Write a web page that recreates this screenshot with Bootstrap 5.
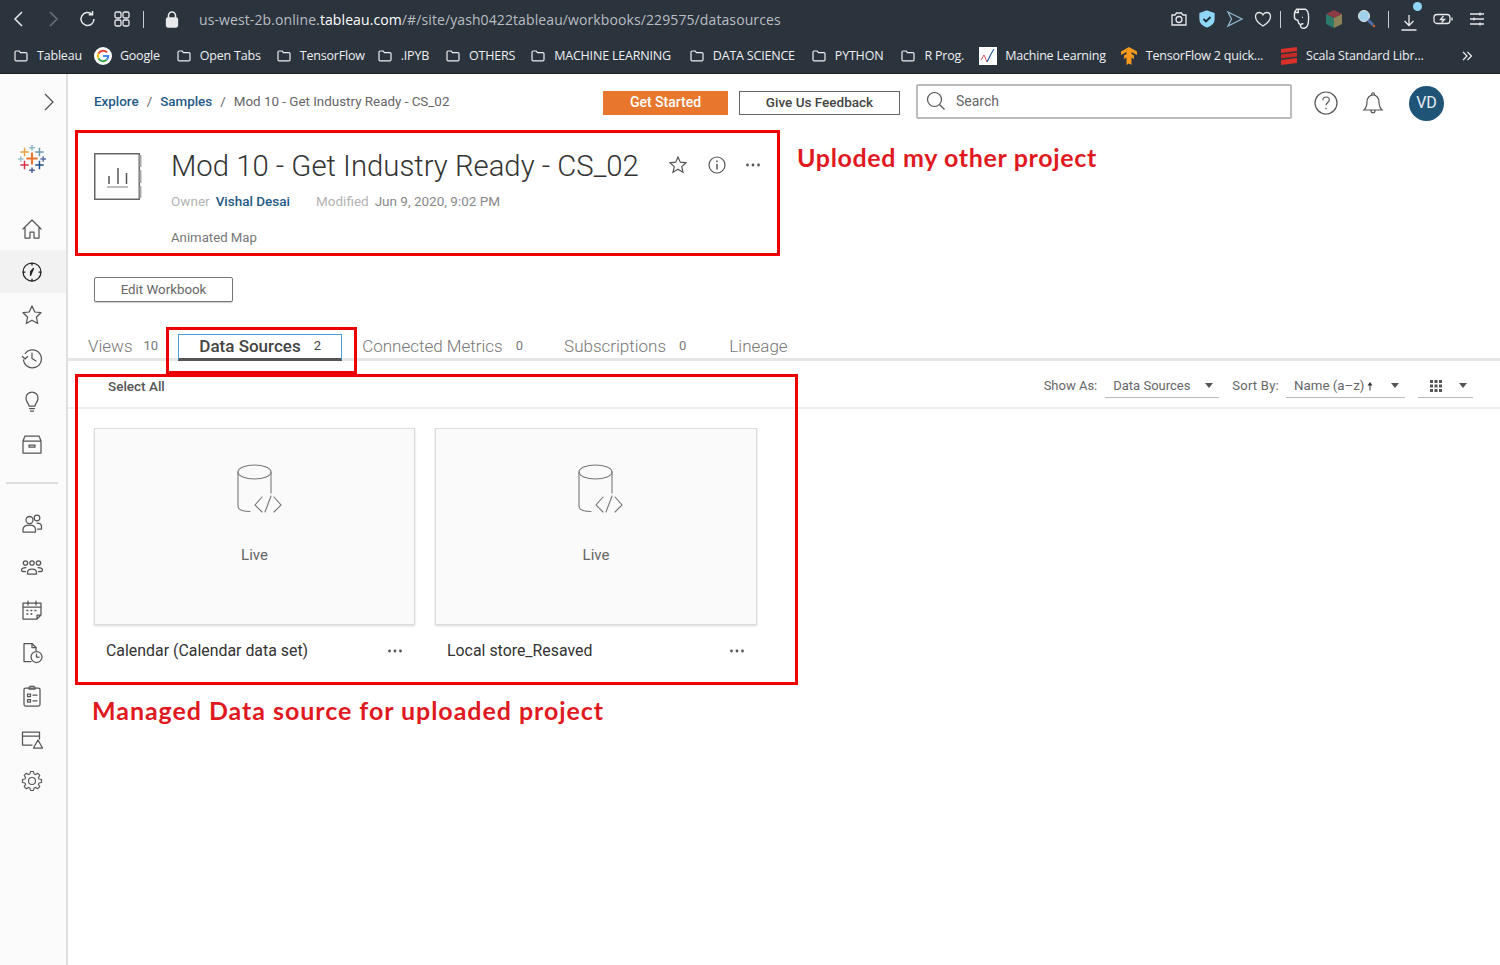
<!DOCTYPE html>
<html lang="en">
<head>
<meta charset="UTF-8">
<title>Mod 10 - Get Industry Ready - CS_02</title>
<link href="https://cdn.jsdelivr.net/npm/bootstrap@5.3.2/dist/css/bootstrap.min.css" rel="stylesheet">
<style>
  html, body { height: 100%; }
  body { font-family: Roboto, "Liberation Sans", sans-serif; color: #555; background: #fff; overflow: hidden; }
  .page-wrap { width: 1500px; height: 965px; }

  /* browser chrome */
  .chrome { height: 74px; background: #2b333d; border-bottom: 1px solid #1b2026; color: #f0f2f4; font-family: "Open Sans", "Noto Sans", sans-serif; }
  .tool-row { height: 38px; }
  .nav-group { padding-left: 8px; }
  .tool-ico { position: relative; width: 20px; height: 20px; flex: none; fill: none; stroke: #e8eaec; stroke-width: 1.3; }
  .tool-sep { width: 1px; height: 17px; background: #c8ccd0; flex: none; }
  .ico-dim { stroke: #6a7178; margin-left: 16px; }
  .ico-gap { margin-left: 14px; }
  .sep-left { margin-left: 11px; }
  .lock-gap { margin-left: 18px; }
  .url-text { font-size: 14px; color: #b9bec3; letter-spacing: .1px; margin-left: 17px; }
  .url-text b { color: #fff; font-weight: 400; }
  .ext-group { gap: 8px; padding-right: 13px; }
  .ico-send { stroke: #8fb6cb; }
  .sep-a { margin-left: -1px; }
  .ico-note { width: 22px; height: 24px; margin-left: 1px; }
  .ico-cube { margin-left: 5px; }
  .ico-mag { margin-left: 6px; }
  .sep-b { margin-left: 3px; }
  .dl-wrap { width: 28px; height: 20px; margin-left: 2px; }
  .dl-dot { left: 14px; top: -7px; width: 9px; height: 9px; background: #8fd6f7; }
  .ico-batt { width: 22px; margin-left: -3px; }
  .ico-menu { margin-left: 5px; }
  .mark-row { height: 35px; font-size: 12.5px; padding: 1px 0 0 14px; letter-spacing: -.2px; white-space: nowrap; gap: 15px; }
  .mark-item { display: flex; align-items: center; gap: 9px; color: #eef0f2; }
  .mark-item svg { flex: none; }
  .mark-item:nth-child(2) { margin-left: -3px; gap: 8px; }
  .mark-item:nth-child(3) { margin-left: 2px; }
  .mark-item:nth-child(4) { margin-left: 1px; }
  .mark-item:nth-child(5) { margin-left: -2px; }
  .mark-item:nth-child(6) { margin-left: 2px; }
  .mark-item:nth-child(7) { margin-left: 1px; }
  .mark-item:nth-child(8) { margin-left: 4px; }
  .mark-item:nth-child(9) { margin-left: 2px; }
  .mark-item:nth-child(10) { margin-left: 3px; }
  .mark-item:nth-child(11) { gap: 8px; }
  .mark-item:nth-child(13) { margin-left: 2px; gap: 8px; }
  .mark-item:nth-child(14) { margin-left: 22px; }

  /* side rail */
  .side-rail { width: 68px; background: #fbfbfb; border-right: 2px solid #dfdfdf; height: 891px; flex: none; }
  .rail-chev { height: 56px; padding-right: 11px; }
  .rail-logo { height: 77px; padding: 15px 2px 0 0; }
  .rail-btn { height: 43px; width: 66px; padding-right: 2px; display: flex; align-items: center; justify-content: center; }
  .rail-btn svg { width: 24px; height: 24px; fill: none; stroke: #555; stroke-width: 1.25; stroke-linecap: round; stroke-linejoin: round; }
  .rail-btn.is-on { background: #f2f2f2; }
  .rail-btn.is-on svg { stroke: #222; }
  .rail-btn svg.gear-ico { width: 22px; height: 22px; margin-top: -2px; }
  .rail-rule { height: 2px; background: #ddd; margin: 17px 8px 18px 6px; }

  /* content */
  .top-row { height: 56px; padding-left: 26px; }
  .crumb-nav { width: 370px; flex: none; white-space: nowrap; }
  .breadcrumb { font-size: 13.4px; flex-wrap: nowrap; --bs-breadcrumb-divider-color: #666; --bs-breadcrumb-item-active-color: #666; --bs-breadcrumb-item-padding-x: 8px; }
  .crumb-link { color: #1f5a87; font-weight: 500; text-decoration: none; }
  .btn-start, .btn-start:hover { width: 125px; height: 24px; margin: 1px 0 0 139px; padding: 0; font-size: 14px; font-weight: 500; background: #e8762d; border: 1px solid #e8762d; color: #fff; border-radius: 0; }
  .btn-feedback, .btn-feedback:hover { width: 161px; height: 24px; margin: 1px 0 0 11px; padding: 0; font-size: 13.5px; font-weight: 500; background: #fff; border: 1px solid #666; color: #444; border-radius: 0; }
  .search-box { width: 376px; height: 35px; margin: 0 0 2px 16px; border: 2px solid #bbb; border-radius: 2px; padding-left: 8px; gap: 10px; font-size: 14px; color: #666; }
  .top-ico { fill: none; stroke: #555; stroke-width: 1.2; flex: none; margin-top: 2px; }
  .help-ico { margin-left: 22px; }
  .bell-ico { margin-left: 23px; }
  .avatar { width: 35px; height: 35px; background: #1f5476; color: #e8eef2; font-size: 16px; flex: none; margin: 2px 0 0 24px; }

  .wb-head { height: 124px; padding: 23px 0 0 26px; }
  .wb-title { font-size: 29.3px; font-weight: 300; color: #333; line-height: 26px; margin: 0; letter-spacing: 0; white-space: nowrap; }
  .wb-info { width: 48px; height: 47px; margin-right: 29px; }
  .wb-text { width: 498px; }
  .wb-meta { font-size: 13.5px; line-height: 16px; margin-top: 14px; }
  .wb-desc { font-size: 13.2px; line-height: 16px; margin-top: 21px; color: #777; }
  .meta-key { color: #b3b3b3; margin-right: 6px; }
  .meta-val { color: #888; }
  .owner-link { color: #1f5a87; font-weight: 500; text-decoration: none; margin-right: 26px; }
  .head-acts { gap: 21px; margin-top: -1px; }
  .head-ico { fill: none; stroke: #555; stroke-width: 1.2; margin-top: 4px; }
  .head-dots { margin: 11px 0 0 -2px; }

  .edit-row { height: 71px; padding: 23px 0 0 26px; }
  .btn-edit, .btn-edit:hover { width: 139px; height: 25px; padding: 0; font-size: 13.3px; color: #666; background: #fff; border: 1px solid #777; border-radius: 2px; box-shadow: 0 1px 1px rgba(0,0,0,.2); }

  .tab-strip { height: 36px; padding-left: 20px; border-bottom: 3px solid #e6e6e6; }
  .tab-strip .nav-link { padding: 8px 0 0; color: #777; font-size: 17px; font-weight: 300; line-height: 20px; height: 33px; display: flex; align-items: center; white-space: nowrap; }
  .tab-strip .nav-link small { font-size: 13px; margin-left: 13px; font-weight: 400; }
  .tab-strip .nav-link small.views-count { margin-left: 11px; }
  .tab-strip .tab-on { width: 164px; height: 27px; padding: 0 0 2px; margin: 0 20px -3px 20px; justify-content: center; color: #444; font-weight: 500; border: 1px solid #4a9fdc; border-bottom: 3px solid #555; }
  .tab-strip .tab-on small { color: #444; }
  .tab-subs { margin-left: 41px; }
  .tab-line { margin-left: 43px; }

  .sub-bar { height: 48px; border-bottom: 2px solid #eee; padding: 3px 27px 0 40px; font-size: 13px; color: #666; }
  .sel-all { font-weight: 500; color: #555; font-size: 13.5px; margin-top: 1px; }
  .pick { height: 24px; border-bottom: 1px solid #bbb; display: flex; align-items: center; justify-content: space-between; margin-top: 1px; padding: 0 6px 0 8px; }
  .pick-show { width: 114px; margin-left: 8px; }
  .sort-lab { margin-left: 13px; letter-spacing: .25px; }
  .pick-sort { width: 119px; margin-left: 7px; font-size: 13.3px; }
  .pick-view { width: 55px; margin-left: 13px; padding-left: 12px; }
  .up-arrow { margin-left: 3px; }
  .caret-down { width: 0; height: 0; border-left: 4.5px solid transparent; border-right: 4.5px solid transparent; border-top: 5px solid #555; }

  .tile-grid { padding: 19px 0 0 26px; gap: 20px; }
  .tile-col { width: 321px; }
  .tile-col + .tile-col { width: 322px; }
  .ds-tile { height: 197px; background: #fafafa; border: 1px solid #ddd; border-radius: 0; box-shadow: 0 1px 2px rgba(0,0,0,.16); align-items: center; padding-top: 35px; color: #666; font-size: 15px; }
  .ds-tile svg { margin-left: 9px; }
  .ds-tile span { margin-top: 31px; }
  .tile-foot { padding: 16px 12px 0 12px; font-size: 15.9px; color: #333; line-height: 20px; }

  /* annotations drawn on top of the screenshot */
  .note-box { position: absolute; border: 3px solid #ee0000; pointer-events: none; }
  .note-a { left: 75px; top: 130px; width: 705px; height: 126px; }
  .note-b { left: 166px; top: 327px; width: 191px; height: 47px; }
  .note-c { left: 75px; top: 374px; width: 723px; height: 311px; }
  .note-text { position: absolute; color: #e0191f; font-family: Lato, "Open Sans", sans-serif; font-weight: 700; font-size: 25px; line-height: 30px; white-space: nowrap; letter-spacing: .65px; }
  .text-a { left: 797px; top: 142px; }
  .text-b { left: 92px; top: 695px; letter-spacing: .95px; }
</style>
</head>
<body>
<svg width="0" height="0" class="position-absolute">
  <symbol id="folder" viewBox="0 0 14 14"><path d="M1 3.200c0-.7.5-1.200 1.200-1.200h3l1.300 1.600h5.300c.7 0 1.200.5 1.200 1.200v5.900c0 .7-.5 1.200-1.200 1.200H2.200c-.7 0-1.200-.5-1.200-1.200z" fill="none" stroke="#eef0f2" stroke-width="1.200"/></symbol>
  <symbol id="dots" viewBox="0 0 16 4"><circle cx="2.500" cy="2" r="1.400" fill="#555"/><circle cx="8" cy="2" r="1.400" fill="#555"/><circle cx="13.500" cy="2" r="1.400" fill="#555"/></symbol>
  <symbol id="db-code" viewBox="0 0 45 49">
    <g fill="none" stroke="#777" stroke-width="1.100" stroke-linecap="round">
      <ellipse cx="17.500" cy="8" rx="16.500" ry="7"/>
      <path d="M1 8v34c0 4 4 5.500 12 5.500"/>
      <path d="M34 8v21"/>
      <path d="M25 33l-7 8 7 7M37 33l7 8-7 7M34 32l-6 16"/>
    </g>
  </symbol>
</svg>

<div class="page-wrap position-relative">
  <header class="chrome">
    <div class="tool-row d-flex align-items-center position-relative">
      <div class="nav-group d-flex align-items-center">
        <svg class="tool-ico" viewBox="0 0 20 20"><path d="M14 3l-7 7 7 7" stroke-width="1.500"/></svg>
        <svg class="tool-ico ico-dim" viewBox="0 0 20 20"><path d="M6 3l7 7-7 7" stroke-width="1.500"/></svg>
        <svg class="tool-ico ico-gap" viewBox="0 0 20 20"><path d="M16 10a6.500 6.500 0 1 1-2-4.700M14.500 2v3.800h-3.800" stroke-width="1.500"/></svg>
        <svg class="tool-ico ico-gap" viewBox="0 0 20 20"><rect x="3" y="3" width="6" height="6" rx="1.500"/><rect x="11" y="3" width="6" height="6" rx="1.500"/><rect x="3" y="11" width="6" height="6" rx="1.500"/><rect x="11" y="11" width="6" height="6" rx="1.500"/></svg>
        <div class="tool-sep sep-left"></div>
        <svg class="tool-ico lock-gap" viewBox="0 0 20 20"><path d="M6.500 9V6.500a3.500 3.500 0 0 1 7 0V9" stroke="#e8eaec" stroke-width="1.600"/><rect x="4.500" y="9" width="11" height="9" rx="1.500" fill="#e8eaec"/></svg>
      </div>
      <div class="url-text">us-west-2b.online.<b>tableau.com</b>/#/site/yash0422tableau/workbooks/229575/datasources</div>
      <div class="ext-group d-flex align-items-center ms-auto">
        <svg class="tool-ico" viewBox="0 0 20 20"><path d="M3 6h3l1.500-2h5L14 6h3v10H3z"/><circle cx="10" cy="10.500" r="3"/></svg>
        <svg class="tool-ico" viewBox="0 0 20 20"><path d="M10 2l7 2.500V10c0 4-3 6.500-7 8-4-1.500-7-4-7-8V4.500z" fill="#8fd6f7" stroke="#8fd6f7"/><path d="M6.500 10l2.500 2.500 4.500-4.500" stroke="#1c2a35" stroke-width="1.800"/></svg>
        <svg class="tool-ico ico-send" viewBox="0 0 20 20"><path d="M3 3l14 7-14 7 3.500-7z"/></svg>
        <svg class="tool-ico" viewBox="0 0 20 20"><path d="M10 17S2.500 12.500 2.500 7.500C2.500 5 4.300 3.500 6.300 3.500c1.600 0 3 .9 3.700 2.300.7-1.400 2.100-2.300 3.700-2.300 2 0 3.800 1.500 3.800 4 0 5-7.500 9.500-7.500 9.500z"/></svg>
        <div class="tool-sep sep-a"></div>
        <svg class="tool-ico ico-note" viewBox="0 0 20 22"><path d="M4 5l2-3h8c2.500 1 3 4 3 8s-.5 9-4 9.500c-2 .3-3.500-.8-3.500-2.300s1.500-2.200 2.700-1.500M4 5v4.500c0 1.500 1 2.500 3 2.500l1 3c.5 1 1.500 1 2.500 .8M4 5h3.500V2M11 9.500h.8"/></svg>
        <svg class="ico-cube" width="18" height="20" viewBox="0 0 18 20"><path d="M9 1l8 4-8 4-8-4z" fill="#8c3b46"/><path d="M1 5l8 4v10l-8-4z" fill="#2d7a6b"/><path d="M17 5l-8 4v10l8-4z" fill="#8d8156"/></svg>
        <svg class="ico-mag" width="20" height="20" viewBox="0 0 20 20"><circle cx="7" cy="7" r="5.500" fill="#9fd0ea" stroke="#e8eaec"/><path d="M11 11l5 5" stroke="#4c6fa8" stroke-width="3"/><circle cx="17" cy="17" r="1.300" fill="#c8622e"/></svg>
        <div class="tool-sep sep-b"></div>
        <div class="dl-wrap position-relative">
          <svg class="tool-ico" viewBox="0 0 20 20"><path d="M10 2v10M5.500 8l4.500 4.500L14.500 8M2.500 17h15"/></svg>
          <span class="dl-dot position-absolute rounded-circle"></span>
        </div>
        <svg class="tool-ico ico-batt" viewBox="0 0 22 20"><rect x="2" y="5.500" width="16" height="9" rx="3"/><path d="M20 8.500v3M11.500 7L8.500 10.500h4L9.500 13.500"/></svg>
        <svg class="tool-ico ico-menu" viewBox="0 0 20 20"><path d="M3 5h14M3 10h14M3 15h14M13 3.500v3M7 8.500v3M13 13.500v3"/></svg>
      </div>
    </div>
    <div class="mark-row d-flex align-items-center">
      <div class="mark-item"><svg width="14" height="14"><use href="#folder"/></svg>Tableau</div>
      <div class="mark-item"><svg width="18" height="18" viewBox="0 0 18 18"><circle cx="9" cy="9" r="9" fill="#fff"/><path d="M13 5.300A5.300 5.300 0 0 0 4.500 6.400" fill="none" stroke="#ea4335" stroke-width="2"/><path d="M4.500 6.400a5.300 5.300 0 0 0 0 5.200" fill="none" stroke="#fbbc05" stroke-width="2"/><path d="M4.500 11.600a5.300 5.300 0 0 0 8.200 1.200" fill="none" stroke="#34a853" stroke-width="2"/><path d="M12.700 12.800A5.300 5.300 0 0 0 14.300 9H9" fill="none" stroke="#4285f4" stroke-width="2"/></svg>Google</div>
      <div class="mark-item"><svg width="14" height="14"><use href="#folder"/></svg>Open Tabs</div>
      <div class="mark-item"><svg width="14" height="14"><use href="#folder"/></svg>TensorFlow</div>
      <div class="mark-item"><svg width="14" height="14"><use href="#folder"/></svg>.IPYB</div>
      <div class="mark-item"><svg width="14" height="14"><use href="#folder"/></svg>OTHERS</div>
      <div class="mark-item"><svg width="14" height="14"><use href="#folder"/></svg>MACHINE LEARNING</div>
      <div class="mark-item"><svg width="14" height="14"><use href="#folder"/></svg>DATA SCIENCE</div>
      <div class="mark-item"><svg width="14" height="14"><use href="#folder"/></svg>PYTHON</div>
      <div class="mark-item"><svg width="14" height="14"><use href="#folder"/></svg>R Prog.</div>
      <div class="mark-item"><svg width="18" height="18" viewBox="0 0 18 18"><rect width="18" height="18" fill="#fff"/><path d="M2 13l3-5 3 7" fill="none" stroke="#d9534f"/><path d="M8 15l4-8 3-5" fill="none" stroke="#2a5ea8" stroke-width="1.200"/></svg>Machine Learning</div>
      <div class="mark-item"><svg width="16" height="18" viewBox="0 0 16 18"><path d="M8 0l8 4.500v3.500l-5.500-3v2L13 8.500V12l-2.500-1.500V18L8 16.500 5.500 18v-7.500L3 12V8.500L5.500 7V5L0 8V4.500z" fill="#f59a1d"/></svg>TensorFlow 2 quick...</div>
      <div class="mark-item"><svg width="18" height="18" viewBox="0 0 18 18"><path d="M1 2l16-2v4L1 6z" fill="#d8312a"/><path d="M1 7.500l16-2v4l-16 2z" fill="#c42a25"/><path d="M1 13l16-2v5L1 18z" fill="#d8312a"/></svg>Scala Standard Libr...</div>
      <div class="mark-item"><svg width="12" height="12" viewBox="0 0 12 12"><path d="M2 2l4 4-4 4M6.500 2l4 4-4 4" fill="none" stroke="#eef0f2" stroke-width="1.200"/></svg></div>
    </div>
  </header>

  <div class="d-flex">
    <aside class="side-rail">
      <div class="rail-chev d-flex align-items-center justify-content-end">
        <svg width="12" height="18" viewBox="0 0 12 18"><path d="M2 1l8 8-8 8" fill="none" stroke="#555" stroke-width="1.300"/></svg>
      </div>
      <div class="rail-logo d-flex justify-content-center">
        <svg width="28" height="28" viewBox="0 0 30 30" fill="none" stroke-width="1.600">
          <path d="M15 8v13M9 14.500h12" stroke="#e8762d" stroke-width="2.200"/>
          <path d="M7 3v9M2.500 7.500h9" stroke="#eb9f3f"/>
          <path d="M15 0v6M12 3h6" stroke="#8fb5c4"/>
          <path d="M23 3v9M18.500 7.500h9" stroke="#6b9aad"/>
          <path d="M3 12v6M0 15h6" stroke="#9cc3c9"/>
          <path d="M27 12v6M24 15h6" stroke="#5b6ea8"/>
          <path d="M7 17v9M2.500 21.500h9" stroke="#d8314a"/>
          <path d="M15 24v6M12 27h6" stroke="#4f5f9c"/>
          <path d="M23 17v9M18.500 21.500h9" stroke="#1f4f8c"/>
        </svg>
      </div>
      <div class="rail-btn"><svg viewBox="0 0 24 24"><path d="M3 12l9-9 9 9M5 10.500V21h5v-6h4v6h5V10.500"/></svg></div>
      <div class="rail-btn is-on"><svg viewBox="0 0 24 24"><circle cx="12" cy="12" r="9"/><path d="M12 3v2M12 19v2M3 12h2M19 12h2M13.500 8.500l-3 7 .2-4z"/></svg></div>
      <div class="rail-btn"><svg viewBox="0 0 24 24"><path d="M12 3l2.800 6 6.200.7-4.600 4.300 1.300 6.500L12 17.200 6.300 20.500 7.600 14 3 9.700 9.200 9z"/></svg></div>
      <div class="rail-btn"><svg viewBox="0 0 24 24"><path d="M5.200 7.500A9 9 0 1 1 3.500 14M2.500 10.500l2.500 2.500 2.500-2.500M12 7v5.500l4 2.500"/></svg></div>
      <div class="rail-btn"><svg viewBox="0 0 24 24"><path d="M9 17c0-2.500-3-3.800-3-8a6 6 0 0 1 12 0c0 4.200-3 5.500-3 8zM9.500 19.500h5M10.500 22h3"/></svg></div>
      <div class="rail-btn"><svg viewBox="0 0 24 24"><path d="M3 9h18v12H3zM5 4h14l2 5H3zM9 13h6v2H9z"/></svg></div>
      <div class="rail-rule"></div>
      <div class="rail-btn"><svg viewBox="0 0 24 24"><circle cx="9.500" cy="8" r="3.500"/><circle cx="17" cy="6" r="2.800"/><path d="M3 20v-2.500c0-3 3-4.500 6.500-4.500s6 1.500 6 4.500V20zM17 11c2.500 0 4.500 1 4.500 3.500V17h-4"/></svg></div>
      <div class="rail-btn"><svg viewBox="0 0 24 24"><circle cx="5.500" cy="8" r="2.200"/><circle cx="12" cy="8" r="2.200"/><circle cx="18.500" cy="8" r="2.200"/><path d="M7.500 19v-1.500c0-2.500 2-3.500 4.500-3.500s4.500 1 4.500 3.500V19zM6 12.500c-2.500 0-4.500 1-4.500 2.500s1 1.500 4 1.500M18 12.500c2.500 0 4.500 1 4.500 2.500s-1 1.500-4 1.500"/></svg></div>
      <div class="rail-btn"><svg viewBox="0 0 24 24"><path d="M3 5h18v12l-4 4H3zM3 9h18M8 3v4M16 3v4M17 21v-4h4"/><path d="M7 12.500h.8M11 12.500h.8M15 12.500h.8M7 16h.8M11 16h.8" stroke-width="1.500"/></svg></div>
      <div class="rail-btn"><svg viewBox="0 0 24 24"><path d="M11 20.500H4v-18h8l4 4v3"/><path d="M12 2.500v4h4"/><circle cx="16.500" cy="16" r="5.500"/><path d="M16.500 13v3.200h2.500"/></svg></div>
      <div class="rail-btn"><svg viewBox="0 0 24 24"><rect x="4" y="4" width="16" height="18" rx="1.500"/><path d="M9 4c0-1.500 1.500-2 3-2s3 .5 3 2v1H9zM7.500 10h3v2.500h-3zM7.500 15.500h3V18h-3zM13 11.200h4M13 16.800h4"/></svg></div>
      <div class="rail-btn"><svg viewBox="0 0 24 24"><path d="M12 18H2.500V5h17v7M2.500 9h17"/><path d="M18 13l4.500 8h-9z"/></svg></div>
      <div class="rail-btn"><svg class="gear-ico" viewBox="0 0 24 24"><circle cx="12" cy="12" r="3.800"/><polygon points="9.800,4.310 10.360,1.630 13.640,1.630 14.200,4.310 15.880,5 18.170,3.510 20.490,5.830 19,8.120 19.690,9.800 22.370,10.360 22.370,13.640 19.690,14.200 19,15.880 20.490,18.170 18.170,20.490 15.880,19 14.200,19.690 13.640,22.370 10.360,22.370 9.800,19.690 8.120,19 5.830,20.490 3.510,18.170 5,15.880 4.310,14.200 1.630,13.640 1.630,10.360 4.310,9.800 5,8.120 3.510,5.830 5.830,3.510 8.120,5"/></svg></div>
    </aside>

    <main class="flex-grow-1">
      <div class="top-row d-flex align-items-center">
        <nav class="crumb-nav" aria-label="breadcrumb">
          <ol class="breadcrumb mb-0">
            <li class="breadcrumb-item"><a class="crumb-link" href="#">Explore</a></li>
            <li class="breadcrumb-item"><a class="crumb-link" href="#">Samples</a></li>
            <li class="breadcrumb-item active" aria-current="page">Mod 10 - Get Industry Ready - CS_02</li>
          </ol>
        </nav>
        <button class="btn btn-start">Get Started</button>
        <button class="btn btn-feedback">Give Us Feedback</button>
        <div class="search-box d-flex align-items-center">
          <svg class="top-ico mt-0" width="20" height="20" viewBox="0 0 20 20"><circle cx="8.500" cy="8.500" r="7"/><path d="M13.500 13.500l5 5"/></svg>
          <span>Search</span>
        </div>
        <svg class="top-ico help-ico" width="24" height="24" viewBox="0 0 24 24"><circle cx="12" cy="12" r="11"/><path d="M8.800 9.200c0-2 1.500-3.200 3.300-3.200s3.200 1.200 3.200 2.900c0 2.600-3.300 2.700-3.300 5.300M12 16.800v1.400"/></svg>
        <svg class="top-ico bell-ico" width="24" height="26" viewBox="0 0 24 26"><path d="M3 20c2-2 3-3.500 3-8 0-4 2.500-7 6-7s6 3 6 7c0 4.500 1 6 3 8zM10.500 5c0-3 3-3 3 0M10 20.500c0 3 4 3 4 0"/></svg>
        <div class="avatar rounded-circle d-flex align-items-center justify-content-center">VD</div>
      </div>

      <section class="wb-head d-flex">
        <svg class="wb-info flex-shrink-0" viewBox="0 0 48 47">
          <rect x=".75" y=".75" width="44.500" height="45.500" fill="#fff" stroke="#666" stroke-width="1.500"/>
          <path d="M46.500 2v12M46.500 17v13M46.500 33v12" stroke="#aaa" stroke-width="2"/>
          <path d="M13 34h21" stroke="#aaa" stroke-width="1.500"/>
          <path d="M15 23v8M24 15v16M32.500 20v11" stroke="#555" stroke-width="1.500"/>
        </svg>
        <div class="wb-text">
          <h1 class="wb-title">Mod 10 - Get Industry Ready - CS_02</h1>
          <div class="wb-meta">
            <span class="meta-key">Owner</span><a class="owner-link" href="#">Vishal Desai</a><span class="meta-key">Modified</span><span class="meta-val">Jun 9, 2020, 9:02 PM</span>
          </div>
          <div class="wb-desc">Animated Map</div>
        </div>
        <div class="head-acts d-flex align-items-start">
          <svg class="head-ico" width="18" height="18" viewBox="0 0 18 18"><path d="M9 1l2.300 5.200 5.700.6-4.300 3.800 1.300 5.600L9 13.300l-5 2.900 1.300-5.600L1 6.800l5.700-.6z"/></svg>
          <svg class="head-ico" width="18" height="18" viewBox="0 0 18 18"><circle cx="9" cy="9" r="8"/><path d="M9 8v5.500M9 4.500v1.800" stroke-width="1.500"/></svg>
          <svg class="head-dots" width="16" height="4"><use href="#dots"/></svg>
        </div>
      </section>

      <div class="edit-row"><button class="btn btn-edit">Edit Workbook</button></div>

      <ul class="nav tab-strip align-items-end">
        <li class="nav-item"><a class="nav-link" href="#">Views<small class="views-count">10</small></a></li>
        <li class="nav-item"><a class="nav-link tab-on" href="#">Data Sources<small>2</small></a></li>
        <li class="nav-item"><a class="nav-link" href="#">Connected Metrics<small>0</small></a></li>
        <li class="nav-item tab-subs"><a class="nav-link" href="#">Subscriptions<small>0</small></a></li>
        <li class="nav-item tab-line"><a class="nav-link" href="#">Lineage</a></li>
      </ul>

      <div class="sub-bar d-flex align-items-center">
        <span class="sel-all">Select All</span>
        <span class="ms-auto">Show As:</span>
        <div class="pick pick-show"><span>Data Sources</span><i class="caret-down"></i></div>
        <span class="sort-lab">Sort By:</span>
        <div class="pick pick-sort"><span>Name (a–z)<svg class="up-arrow" width="6" height="10" viewBox="0 0 6 10"><path d="M3 1L.5 4.500h2V9.500h1V4.500h2z" fill="#333"/></svg></span><i class="caret-down"></i></div>
        <div class="pick pick-view">
          <svg width="12" height="12" viewBox="0 0 12 12" fill="#555"><rect width="3" height="3"/><rect x="4.500" width="3" height="3"/><rect x="9" width="3" height="3"/><rect y="4.500" width="3" height="3"/><rect x="4.500" y="4.500" width="3" height="3"/><rect x="9" y="4.500" width="3" height="3"/><rect y="9" width="3" height="3"/><rect x="4.500" y="9" width="3" height="3"/><rect x="9" y="9" width="3" height="3"/></svg>
          <i class="caret-down"></i>
        </div>
      </div>

      <div class="tile-grid d-flex">
        <div class="tile-col">
          <div class="card ds-tile"><svg width="45" height="49"><use href="#db-code"/></svg><span>Live</span></div>
          <div class="tile-foot d-flex align-items-center justify-content-between"><span>Calendar (Calendar data set)</span><svg width="16" height="4"><use href="#dots"/></svg></div>
        </div>
        <div class="tile-col">
          <div class="card ds-tile"><svg width="45" height="49"><use href="#db-code"/></svg><span>Live</span></div>
          <div class="tile-foot d-flex align-items-center justify-content-between"><span>Local store_Resaved</span><svg width="16" height="4"><use href="#dots"/></svg></div>
        </div>
      </div>
    </main>
  </div>

  <div class="note-box note-a"></div>
  <div class="note-box note-b"></div>
  <div class="note-box note-c"></div>
  <div class="note-text text-a">Uploded my other project</div>
  <div class="note-text text-b">Managed Data source for uploaded project</div>
</div>
<script src="https://cdn.jsdelivr.net/npm/bootstrap@5.3.2/dist/js/bootstrap.bundle.min.js"></script>
</body>
</html>
